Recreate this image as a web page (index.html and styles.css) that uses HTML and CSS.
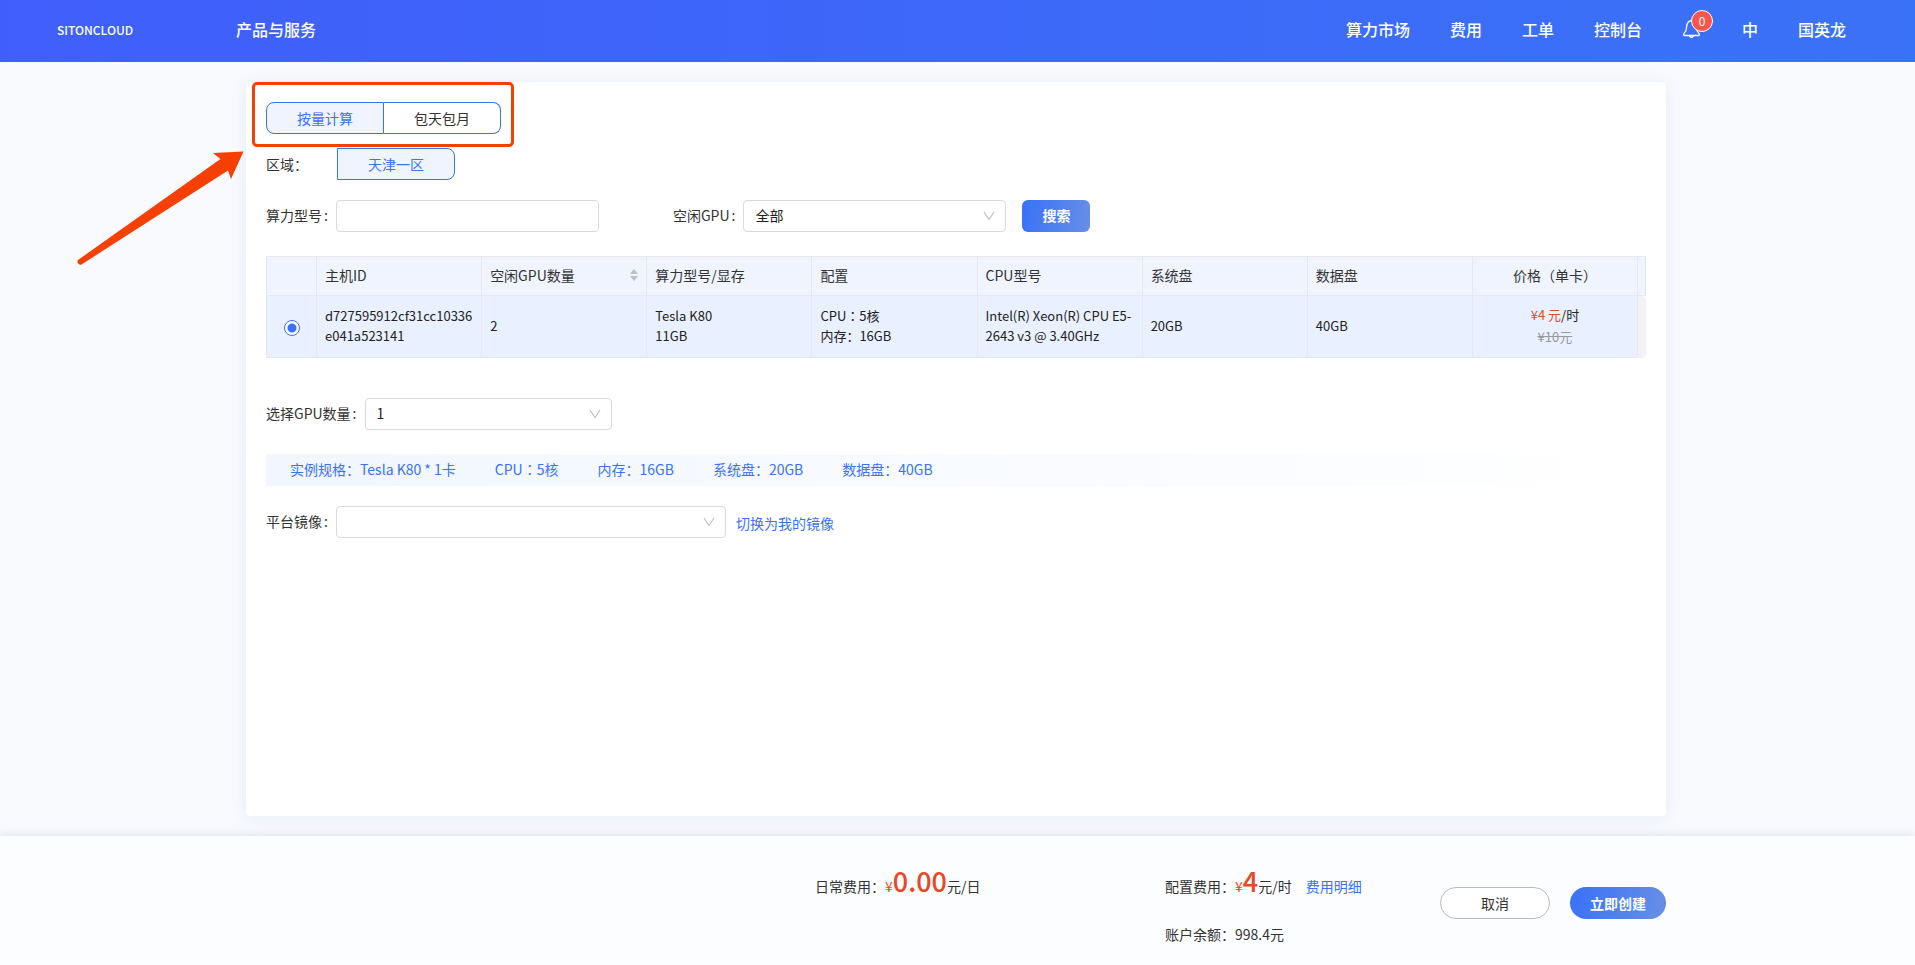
FILE: index.html
```html
<!DOCTYPE html>
<html lang="zh-CN">
<head>
<meta charset="utf-8">
<title>SITONCLOUD</title>
<link rel="stylesheet" href="styles.css">
</head>
<body>
<header class="topbar">
  <a class="logo" href="#">SITONCLOUD</a>
  <nav class="nav-main"><a href="#">产品与服务</a></nav>
  <nav class="nav-user">
    <a href="#">算力市场</a>
    <a href="#">费用</a>
    <a href="#">工单</a>
    <a href="#">控制台</a>
    <a href="#" class="bell" aria-label="通知">
      <svg width="20" height="20" viewBox="0 0 20 20" fill="none" stroke="currentColor" stroke-width="1.3" stroke-linejoin="round" stroke-linecap="round"><path d="M9.500 1.500C6 2 4.800 4.500 4.600 8c-.2 3.500-.8 5-2.600 6.600-.8.800-.5 1.900.4 1.900h14.200c.9 0 1.200-1.100.4-1.900-1.800-1.600-2.400-3.100-2.600-6.600C14.200 4.500 13 2 9.500 1.500zM7.800 17.200a1.800 1.800 0 0 0 3.400 0"/></svg>
      <span class="badge">0</span>
    </a>
    <a href="#">中</a>
    <a href="#">国英龙</a>
  </nav>
</header>

<main class="page">
  <section class="card">
    <div class="tabs">
      <button class="tab tab-active" type="button">按量计算</button>
      <button class="tab" type="button">包天包月</button>
    </div>

    <div class="region">
      <span class="region-label">区域：</span>
      <button class="region-option" type="button">天津一区</button>
    </div>

    <form class="filters">
      <label class="label" for="model">算力型号<span class="colon">:</span></label>
      <input class="field field-m" id="model" type="text">
      <label class="label label-gpu" for="idle">空闲GPU<span class="colon">:</span></label>
      <div class="select field-m">
        <select class="field" id="idle"><option>全部</option></select>
        <svg class="chevron" width="12" height="12" viewBox="0 0 12 12"><path d="M1 2l5 7.500L11 2"/></svg>
      </div>
      <button class="btn-search" type="button">搜索</button>
    </form>

    <table class="hosts">
      <colgroup><col class="col-radio"><col><col><col><col><col><col><col><col><col class="col-gutter"></colgroup>
      <thead>
        <tr>
          <th></th><th>主机ID</th>
          <th><div class="sortable">空闲GPU数量<svg width="8" height="14" viewBox="0 0 8 14" fill="#bfbfbf"><path d="M4 1l4 5H0zM4 13l4-5H0z"/></svg></div></th>
          <th>算力型号/显存</th><th>配置</th><th>CPU型号</th><th>系统盘</th><th>数据盘</th>
          <th class="price">价格（单卡）</th><th class="gutter"></th>
        </tr>
      </thead>
      <tbody>
        <tr>
          <td class="pick"><input class="radio" type="radio" name="host" aria-label="选择主机" checked></td>
          <td>d727595912cf31cc10336e041a523141</td>
          <td>2</td>
          <td>Tesla K80<br>11GB</td>
          <td><span class="mid" lang="zh-TW">CPU：</span>5核<br>内存：16GB</td>
          <td>Intel(R) Xeon(R) CPU E5-2643 v3 @ 3.40GHz</td>
          <td>20GB</td>
          <td>40GB</td>
          <td class="price"><span class="red">¥4 元</span>/时<br><s>¥10元</s></td>
          <td class="gutter"></td>
        </tr>
      </tbody>
    </table>

    <div class="row row-count">
      <label class="label" for="count">选择GPU数量<span class="colon">:</span></label>
      <div class="select field-s">
        <select class="field" id="count"><option>1</option></select>
        <svg class="chevron" width="12" height="12" viewBox="0 0 12 12"><path d="M1 2l5 7.500L11 2"/></svg>
      </div>
    </div>

    <div class="spec">
      <span>实例规格：Tesla K80 * 1卡</span>
      <span><span class="mid" lang="zh-TW">CPU：</span>5核</span>
      <span>内存：16GB</span>
      <span>系统盘：20GB</span>
      <span>数据盘：40GB</span>
    </div>

    <div class="row">
      <label class="label" for="image">平台镜像<span class="colon">:</span></label>
      <div class="select field-l">
        <select class="field" id="image"><option></option></select>
        <svg class="chevron" width="12" height="12" viewBox="0 0 12 12"><path d="M1 2l5 7.500L11 2"/></svg>
      </div>
      <a class="link" href="#">切换为我的镜像</a>
    </div>
  </section>
</main>

<footer class="checkout">
  <div class="cost cost-daily">日常费用：<span class="red">¥<span class="amount">0.00</span></span>元/日</div>
  <div class="summary">
    <div class="cost">配置费用：<span class="red">¥<span class="amount">4</span></span>元/时<a class="link" href="#">费用明细</a></div>
    <div class="balance">账户余额：998.4元</div>
  </div>
  <div class="actions">
    <button class="btn-cancel" type="button">取消</button>
    <button class="btn-create" type="button">立即创建</button>
  </div>
</footer>

<div class="callout-box"></div>
<svg class="callout-arrow" width="170" height="120" viewBox="0 0 170 120"><path d="M1 111L143.500 10L136 4L166.500 2.500L154 30L151 21.500L4.500 115.500A3 3 0 0 1 1 111z" fill="#f63f02"/></svg>
</body>
</html>
```
FILE: styles.css
```css
* {
  box-sizing: border-box;
}

body {
  margin: 0;
  min-height: 100vh;
  display: flex;
  flex-direction: column;
  position: relative;
  background: #f9fafe;
  color: #333;
  font: 14px/22px "Noto Sans CJK SC", sans-serif;
}

button,
input,
select {
  margin: 0;
  font: inherit;
  color: inherit;
}

a {
  color: inherit;
  text-decoration: none;
}

.topbar {
  display: flex;
  align-items: center;
  height: 62px;
  padding: 0 69px 4px 57px;
  background: linear-gradient(90deg, #405efb, #3a72f7);
  color: #fff;
  font-size: 16px;
  font-weight: 500;
}

.logo {
  width: 179px;
  padding-top: 2px;
  font-size: 12px;
  font-weight: 500;
}

.nav-user {
  display: flex;
  align-items: center;
  gap: 40px;
  margin-left: auto;
}

.bell {
  position: relative;
  height: 20px;
}

.bell svg {
  display: block;
}

.badge {
  position: absolute;
  left: 9px;
  top: -9px;
  width: 22px;
  height: 22px;
  border: 1px solid #fff;
  border-radius: 50%;
  background: #f9554b;
  font-size: 12px;
  font-weight: 400;
  line-height: 20px;
  text-align: center;
}

.page {
  flex: 1;
  display: flex;
  padding: 20px 249px 20px 246px;
}

.card {
  flex: 1;
  min-width: 0;
  padding: 20px;
  border-radius: 4px;
  background: #fff;
  box-shadow: 0 2px 16px rgba(190, 210, 225, 0.35);
}

.tabs {
  display: flex;
  margin-bottom: 14px;
}

.tab,
.region-option {
  width: 118px;
  height: 32px;
  padding: 0;
  border: 1px solid #3971f7;
  background: #fff;
}

.tab:first-child {
  border-radius: 8px 0 0 8px;
}

.tab:last-child {
  width: 117px;
  border-left: 0;
  border-radius: 0 8px 8px 0;
}

.tab-active,
.region-option {
  background: #f0f4ff;
  color: #3971f7;
}

.region {
  display: flex;
  align-items: center;
}

.region-label {
  width: 71px;
}

.region-option {
  border-radius: 0 8px 8px 0;
}

.filters,
.row {
  display: flex;
  align-items: center;
}

.filters {
  margin: 20px 0 24px;
}

.label {
  padding-bottom: 2px;
  white-space: nowrap;
}

.colon {
  margin: 0 8px 0 2px;
}

.label-gpu {
  margin-left: 74px;
}

.field {
  width: 100%;
  height: 32px;
  padding: 0 11px 2px;
  border: 1px solid #d9d9d9;
  border-radius: 4px;
  background: #fff;
  color: #222;
  appearance: none;
}

.field-s {
  width: 247px;
}

.field-m {
  width: 263px;
}

.field-l {
  width: 390px;
}

.select {
  position: relative;
}

.select .field {
  display: block;
}

.chevron {
  position: absolute;
  right: 11px;
  top: 10px;
  fill: none;
  stroke: #bfbfbf;
  stroke-width: 1.2;
  pointer-events: none;
}

.btn-search,
.btn-create {
  height: 32px;
  padding: 0;
  border: 0;
  background: linear-gradient(100deg, #3971f7, #688fe6);
  color: #fff;
  font-weight: 700;
}

.btn-search {
  width: 68px;
  margin-left: 16px;
  padding-bottom: 2px;
  border-radius: 6px;
}

.hosts {
  width: 100%;
  table-layout: fixed;
  border-spacing: 0;
}

.col-radio {
  width: 51px;
}

.col-gutter {
  width: 8px;
}

.hosts th,
.hosts td {
  padding: 8px;
  border-right: 1px solid #e8e8ec;
  border-bottom: 1px solid #e8e8ec;
  text-align: left;
}

.hosts th {
  padding: 7px 8px 9px;
  border-top: 1px solid #e8e8ec;
  background: #f0f4ff;
  font-weight: 400;
  line-height: 22px;
}

.hosts td {
  padding: 8px 8px 10px;
  background: #e9f0ff;
  color: #222;
  font-size: 13px;
  line-height: 20px;
  word-break: break-word;
}

.hosts th:first-child,
.hosts td:first-child {
  border-left: 1px solid #e8e8ec;
}

.hosts th.gutter,
.hosts td.gutter {
  padding: 0;
}

.hosts td.gutter {
  border: 0;
  border-radius: 0 4px 4px 0;
  background: #f3f2f8;
}

.hosts .price {
  text-align: center;
}

.hosts td.price {
  padding: 8px 8px 9px;
  line-height: 22px;
}

.hosts td.pick {
  padding: 0;
  text-align: center;
}

.price s {
  color: #999;
}

.sortable {
  display: flex;
  align-items: center;
  justify-content: space-between;
}

.mid {
  font-family: "Noto Sans CJK TC", sans-serif;
}

.radio {
  width: 16px;
  height: 16px;
  border: 1px solid #3971f7;
  border-radius: 50%;
  background: radial-gradient(circle, #3971f7 4px, #fff 5px);
  appearance: none;
  vertical-align: middle;
}

.row-count {
  margin-top: 40px;
}

.spec {
  display: flex;
  gap: 39px;
  margin: 24px 0 20px;
  padding: 4px 24px 6px;
  background: linear-gradient(90deg, #f1f6ff, #fff);
  color: #3971f7;
}

.link {
  color: #3971f7;
}

.row .link {
  margin-left: 10px;
  padding-top: 2px;
}

.red {
  color: #ea4724;
}

.checkout {
  display: flex;
  height: 129px;
  padding: 27px 249px 0 0;
  justify-content: flex-end;
  background: #fcfdff;
  box-shadow: 0 -2px 8px rgba(180, 195, 205, 0.35);
}

.cost {
  height: 36px;
  line-height: 36px;
  white-space: nowrap;
}

.cost .link {
  margin-left: 14px;
}

.amount {
  font-size: 27px;
  font-weight: 500;
}

.cost-daily {
  width: 350px;
}

.summary {
  width: 275px;
}

.balance {
  margin-top: 24px;
}

.actions {
  display: flex;
  gap: 20px;
  padding-top: 24px;
}

.btn-cancel,
.btn-create {
  height: 32px;
  border-radius: 16px;
}

.btn-cancel {
  width: 110px;
  border: 1px solid #bbb;
  background: #fff;
}

.btn-create {
  width: 96px;
}

.callout-box {
  position: absolute;
  left: 252px;
  top: 82px;
  width: 262px;
  height: 65px;
  border: 3px solid #f63f02;
  border-radius: 5px;
  pointer-events: none;
}

.callout-arrow {
  position: absolute;
  left: 77px;
  top: 149px;
  pointer-events: none;
}
```
